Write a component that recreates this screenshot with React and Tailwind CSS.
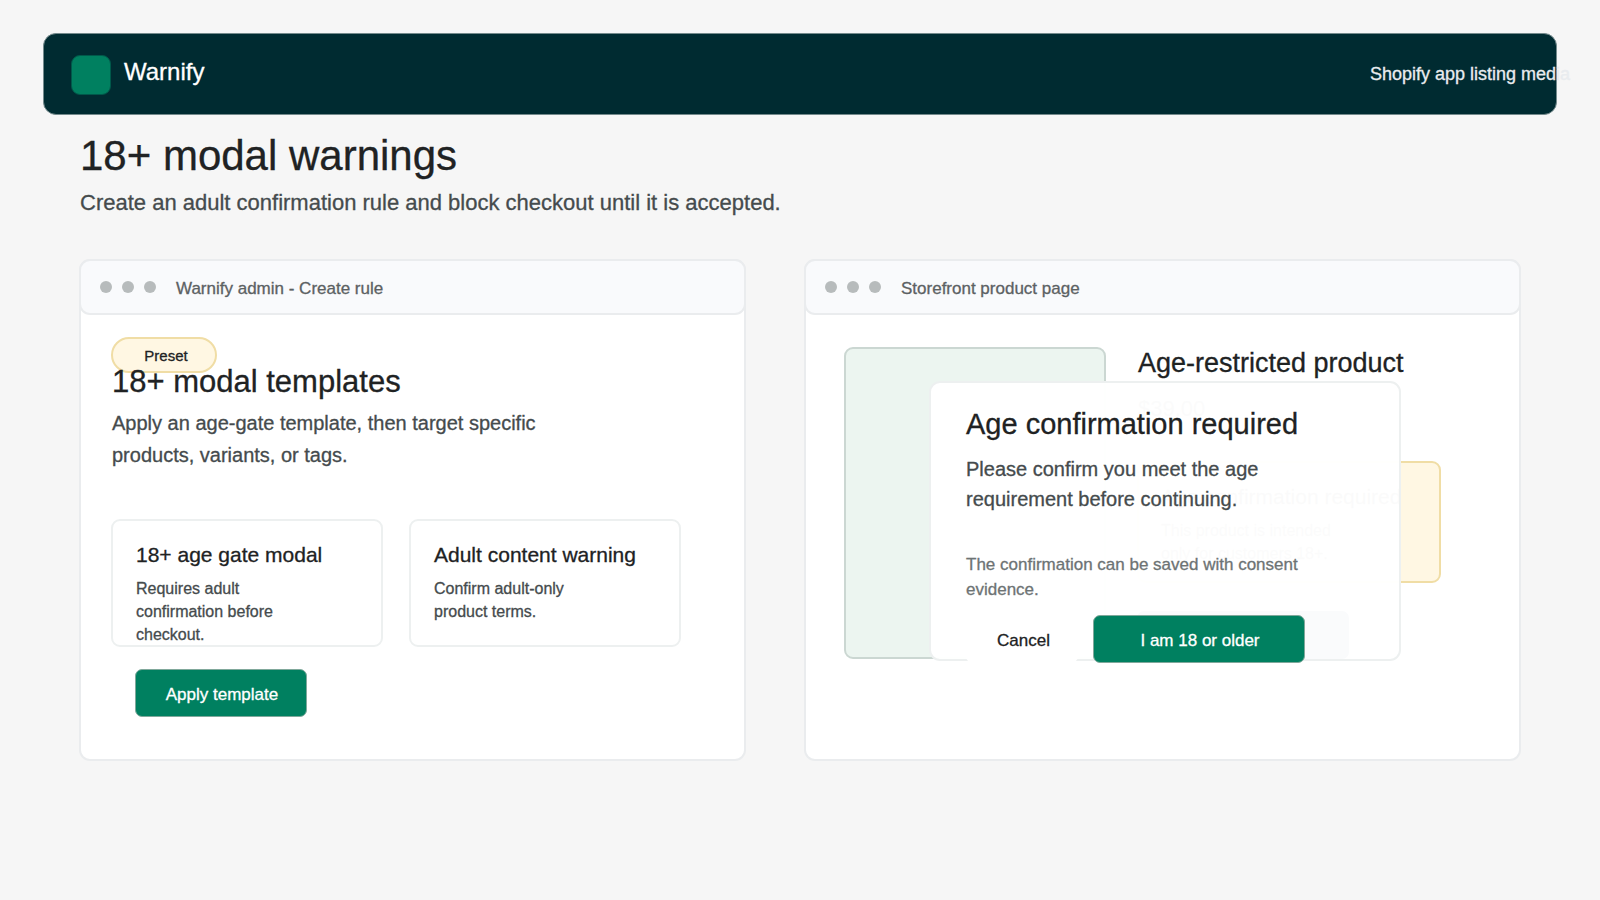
import clsx from 'clsx'

const templates = [
  {
    title: '18+ age gate modal',
    lines: ['Requires adult', 'confirmation before', 'checkout.'],
  },
  {
    title: 'Adult content warning',
    lines: ['Confirm adult-only', 'product terms.'],
  },
]

function Lines({ lines, className }) {
  return (
    <p className={className}>
      {lines.map((line) => (
        <span key={line} className="block">
          {line}
        </span>
      ))}
    </p>
  )
}

function Button({ children, className }) {
  return (
    <button
      className={clsx(
        'flex h-12 items-center justify-center rounded-[7px] border border-[#80a89b] bg-[#008060] pt-[3px] pl-[2px] text-[17px] leading-5 text-white',
        className,
      )}
    >
      {children}
    </button>
  )
}

function BrowserWindow({ title, className, children }) {
  return (
    <section
      className={clsx(
        'relative h-[502px] rounded-[11px] border-2 border-[#eaecee] bg-white',
        className,
      )}
    >
      <div className="-m-[2px] flex h-14 items-center rounded-[11px] border-2 border-[#eaecee] bg-[#f9fafc] pl-[19px]">
        <div className="flex gap-2.5">
          <span className="size-3 rounded-full bg-[#b7bbbc]" />
          <span className="size-3 rounded-full bg-[#b7bbbc]" />
          <span className="size-3 rounded-full bg-[#b7bbbc]" />
        </div>
        <span className="mt-[3px] ml-5 text-[17px] leading-5 text-[#5c6163]">{title}</span>
      </div>
      {children}
    </section>
  )
}

function Header() {
  return (
    <header className="mx-[43px] flex h-[82px] items-start rounded-[13px] border border-[#748a8c] bg-[#002b31]">
      <div className="mt-[21px] ml-[27px] size-10 rounded-[9px] border border-[#00584a] bg-[#008060]" />
      <span className="mt-6 ml-[13px] text-2xl leading-7 text-white">Warnify</span>
      <span className="mt-[30px] -mr-[14px] ml-auto text-lg leading-5 text-[#e9ecef]">
        Shopify app listing media
      </span>
    </header>
  )
}

function AdminWindow() {
  return (
    <BrowserWindow title="Warnify admin - Create rule" className="w-[667px]">
      <div className="pt-6 pl-[31px]">
        <div className="-ml-px flex h-9 w-[106px] items-center justify-center rounded-full border-2 border-[#f0dda5] bg-[#fff7e3] pt-px pl-1 text-[15px] leading-5 text-[#202223]">
          Preset
        </div>
        <h2 className="relative -mt-[9px] text-[31px] leading-9 text-[#202223]">
          18+ modal templates
        </h2>
        <Lines
          className="mt-[7px] text-xl leading-8 text-[#454b4d]"
          lines={['Apply an age-gate template, then target specific', 'products, variants, or tags.']}
        />
        <div className="mt-12 -ml-px flex gap-[26px]">
          {templates.map((template) => (
            <div
              key={template.title}
              className="h-32 w-[272px] rounded-[9px] border-2 border-[#edf0f0] bg-white pt-[22px] pl-[23px]"
            >
              <h3 className="text-[21px] leading-6 text-[#202223]">{template.title}</h3>
              <Lines
                className="mt-2.5 text-base leading-[23px] text-[#454b4d]"
                lines={template.lines}
              />
            </div>
          ))}
        </div>
        <Button className="mt-[22px] ml-[23px] w-[172px]">Apply template</Button>
      </div>
    </BrowserWindow>
  )
}

function ConfirmModal() {
  return (
    <div className="absolute top-[120px] left-[123px] h-[280px] w-[472px] rounded-[11px] border-2 border-[#edf0f0] bg-white/98 pt-6 pl-[35px]">
      <h2 className="text-[29px] leading-[34px] text-[#202223]">Age confirmation required</h2>
      <Lines
        className="mt-[13px] text-xl leading-[30px] text-[#454b4d]"
        lines={['Please confirm you meet the age', 'requirement before continuing.']}
      />
      <Lines
        className="mt-[38px] text-[17px] leading-[25px] text-[#6d7374]"
        lines={['The confirmation can be saved with consent', 'evidence.']}
      />
      <div className="mt-[13px] flex gap-[15px]">
        <button className="flex h-12 w-28 items-center justify-center rounded-[7px] bg-white pt-[3px] pl-[3px] text-[17px] leading-5 text-[#202223]">
          Cancel
        </button>
        <Button className="w-[212px]">I am 18 or older</Button>
      </div>
    </div>
  )
}

function StorefrontWindow() {
  return (
    <BrowserWindow title="Storefront product page" className="w-[717px]">
      <div className="flex gap-8 pt-[34px] pl-[38px]">
        <div className="h-[312px] w-[262px] rounded-[9px] border-2 border-[#cbd7d2] bg-[#ecf5f0]" />
        <div>
          <h2 className="text-[27px] leading-8 text-[#202223]">Age-restricted product</h2>
          <p className="mt-[17px] text-[22px] leading-[26px] text-[#454b4d]">$39.00</p>
          <div className="mt-[39px] -ml-px h-[122px] w-[304px] rounded-[9px] border-2 border-[#f0dda5] bg-[#fff7e3] pt-[22px] pl-[22px]">
            <h3 className="text-[21px] leading-6 text-[#202223]">Age confirmation required</h3>
            <Lines
              className="mt-2.5 text-base leading-[23px] text-[#454b4d]"
              lines={['This product is intended', 'only for customers 18+.']}
            />
          </div>
          <div className="mt-7 -ml-px h-12 w-[212px] rounded-[7px] bg-[#003c70]" />
        </div>
      </div>
      <ConfirmModal />
    </BrowserWindow>
  )
}

export default function App() {
  return (
    <div className="h-[900px] w-[1600px] overflow-hidden bg-[#f6f6f6] pt-[33px] font-['Liberation_Sans',Arial,sans-serif] whitespace-nowrap [-webkit-text-stroke:0.3px]">
      <Header />
      <main className="pl-[79px]">
        <h1 className="mt-[17px] pl-px text-[42px] leading-[48px] text-[#202223]">
          18+ modal warnings
        </h1>
        <p className="mt-2.5 pl-px text-[22px] leading-[26px] text-[#454b4d]">
          Create an adult confirmation rule and block checkout until it is accepted.
        </p>
        <div className="mt-[43px] flex gap-[58px]">
          <AdminWindow />
          <StorefrontWindow />
        </div>
      </main>
    </div>
  )
}
